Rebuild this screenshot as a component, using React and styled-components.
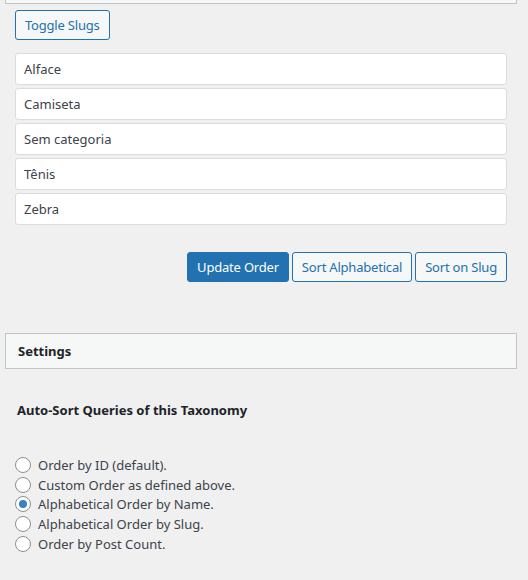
import React, { useState } from "react";
import styled, { createGlobalStyle } from "styled-components";

const Global = createGlobalStyle`
  html, body { margin: 0; padding: 0; background: #f0f0f1; }
  body {
    font-family: "Noto Sans", "Open Sans", sans-serif;
    font-size: 13px;
    color: #3c434a;
  }
  * { box-sizing: border-box; }
`;

const Page = styled.div`
  padding: 0 11px 30px 5px;
`;

const BoxBottom = styled.div`
  height: 4px;
  background: #f6f7f7;
  border: 1px solid #c3c4c7;
  border-top: none;
`;

const Inner = styled.div`
  padding: 6px 10px 0;
`;

const Button = styled.button`
  display: inline-flex;
  align-items: center;
  height: 30px;
  padding: 0 9px;
  font-family: inherit;
  font-size: 13px;
  letter-spacing: -0.2px;
  line-height: 1;
  border-radius: 3px;
  border: 1px solid #2271b1;
  background: ${(p) => (p.$primary ? "#2271b1" : "#f6f7f7")};
  color: ${(p) => (p.$primary ? "#fff" : "#2271b1")};
  cursor: pointer;
`;

const List = styled.ul`
  list-style: none;
  margin: 13px 0 0;
  padding: 0;
  display: flex;
  flex-direction: column;
  gap: 3px;
`;

const Item = styled.li`
  height: 32px;
  display: flex;
  align-items: center;
  padding: 0 8px;
  background: #fff;
  border: 1px solid #dcdcde;
  border-radius: 3px;
  color: #3c434a;
`;

const Actions = styled.div`
  display: flex;
  justify-content: flex-end;
  gap: 3px;
  margin-top: 27px;
`;

const SettingsBar = styled.div`
  margin-top: 51px;
  height: 36px;
  display: flex;
  align-items: center;
  padding: 0 12px;
  background: #f6f7f7;
  border: 1px solid #c3c4c7;
  font-weight: 700;
  font-size: 13px;
  color: #1d2327;
`;

const Section = styled.div`
  padding: 0 12px;
`;

const Heading = styled.h3`
  margin: 31px 0 0;
  font-size: 13px;
  font-weight: 700;
  line-height: 20px;
  color: #1d2327;
`;

const Options = styled.div`
  margin-top: 35px;
  display: flex;
  flex-direction: column;
`;

const Option = styled.label`
  display: flex;
  align-items: center;
  gap: 7px;
  height: 19.75px;
  margin-left: -2px;
  cursor: pointer;
`;

const Radio = styled.span`
  width: 16px;
  height: 16px;
  border-radius: 50%;
  border: 1px solid #8c8f94;
  background: #fff;
  display: flex;
  align-items: center;
  justify-content: center;
  flex: none;
  &::before {
    content: "";
    width: 8px;
    height: 8px;
    border-radius: 50%;
    background: #3582c4;
    display: ${(p) => (p.$checked ? "block" : "none")};
  }
`;

const items = ["Alface", "Camiseta", "Sem categoria", "Tênis", "Zebra"];
const options = [
  "Order by ID (default).",
  "Custom Order as defined above.",
  "Alphabetical Order by Name.",
  "Alphabetical Order by Slug.",
  "Order by Post Count.",
];

export default function App() {
  const [sel, setSel] = useState(2);
  return (
    <Page>
      <Global />
      <BoxBottom />
      <Inner>
        <Button>Toggle Slugs</Button>
        <List>
          {items.map((t) => (
            <Item key={t}>{t}</Item>
          ))}
        </List>
        <Actions>
          <Button $primary>Update Order</Button>
          <Button>Sort Alphabetical</Button>
          <Button>Sort on Slug</Button>
        </Actions>
      </Inner>
      <SettingsBar>Settings</SettingsBar>
      <Section>
        <Heading>Auto-Sort Queries of this Taxonomy</Heading>
        <Options>
          {options.map((o, i) => (
            <Option key={o} onClick={() => setSel(i)}>
              <Radio $checked={sel === i} />
              {o}
            </Option>
          ))}
        </Options>
      </Section>
    </Page>
  );
}
